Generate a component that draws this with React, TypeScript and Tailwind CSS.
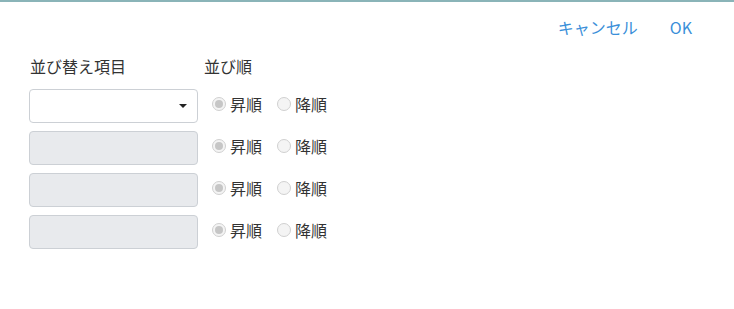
import React from 'react'

const rows = [0, 1, 2, 3]

function Radio({ checked, label }: { checked?: boolean; label: string }) {
  return (
    <label className="flex items-center gap-[4px] text-[16px] text-[#333] leading-[22px]">
      <span className="w-[14px] h-[14px] rounded-full border border-[#d0d0d0] bg-[#f4f4f4] flex items-center justify-center mt-[1px]">
        {checked && <span className="w-[8px] h-[8px] rounded-full bg-[#c6c6c6]" />}
      </span>
      {label}
    </label>
  )
}

export default function App() {
  return (
    <div
      className="w-[734px] h-[309px] bg-white border-t-2 border-[#8ab4b8]"
      style={{ fontFamily: '"Noto Sans CJK JP", "Noto Sans", sans-serif' }}
    >
      <div className="flex justify-end gap-[32px] pr-[42px] pt-[14px] text-[16px] text-[#3a8fd9] leading-[22px]">
        <button>キャンセル</button>
        <button>OK</button>
      </div>
      <div className="pl-[29px] pt-[17px]">
        <div className="flex text-[16px] text-[#333] leading-[22px] mb-[12px]">
          <div className="w-[175px] pl-[1px]">並び替え項目</div>
          <div>並び順</div>
        </div>
        <div className="flex flex-col gap-[8px]">
          {rows.map((i) => (
            <div key={i} className="flex items-center">
              {i === 0 ? (
                <div className="w-[169px] h-[34px] rounded-[4px] border border-[#ccd0d5] bg-white flex items-center justify-end pr-[10px]">
                  <span className="w-0 h-0 border-l-[4px] border-r-[4px] border-t-[4px] border-l-transparent border-r-transparent border-t-[#222]" />
                </div>
              ) : (
                <div className="w-[169px] h-[34px] rounded-[4px] border border-[#ccd0d5] bg-[#e8eaed]" />
              )}
              <div className="flex items-center gap-[15px] ml-[14px] pb-[5px]">
                <Radio checked label="昇順" />
                <Radio label="降順" />
              </div>
            </div>
          ))}
        </div>
      </div>
    </div>
  )
}
